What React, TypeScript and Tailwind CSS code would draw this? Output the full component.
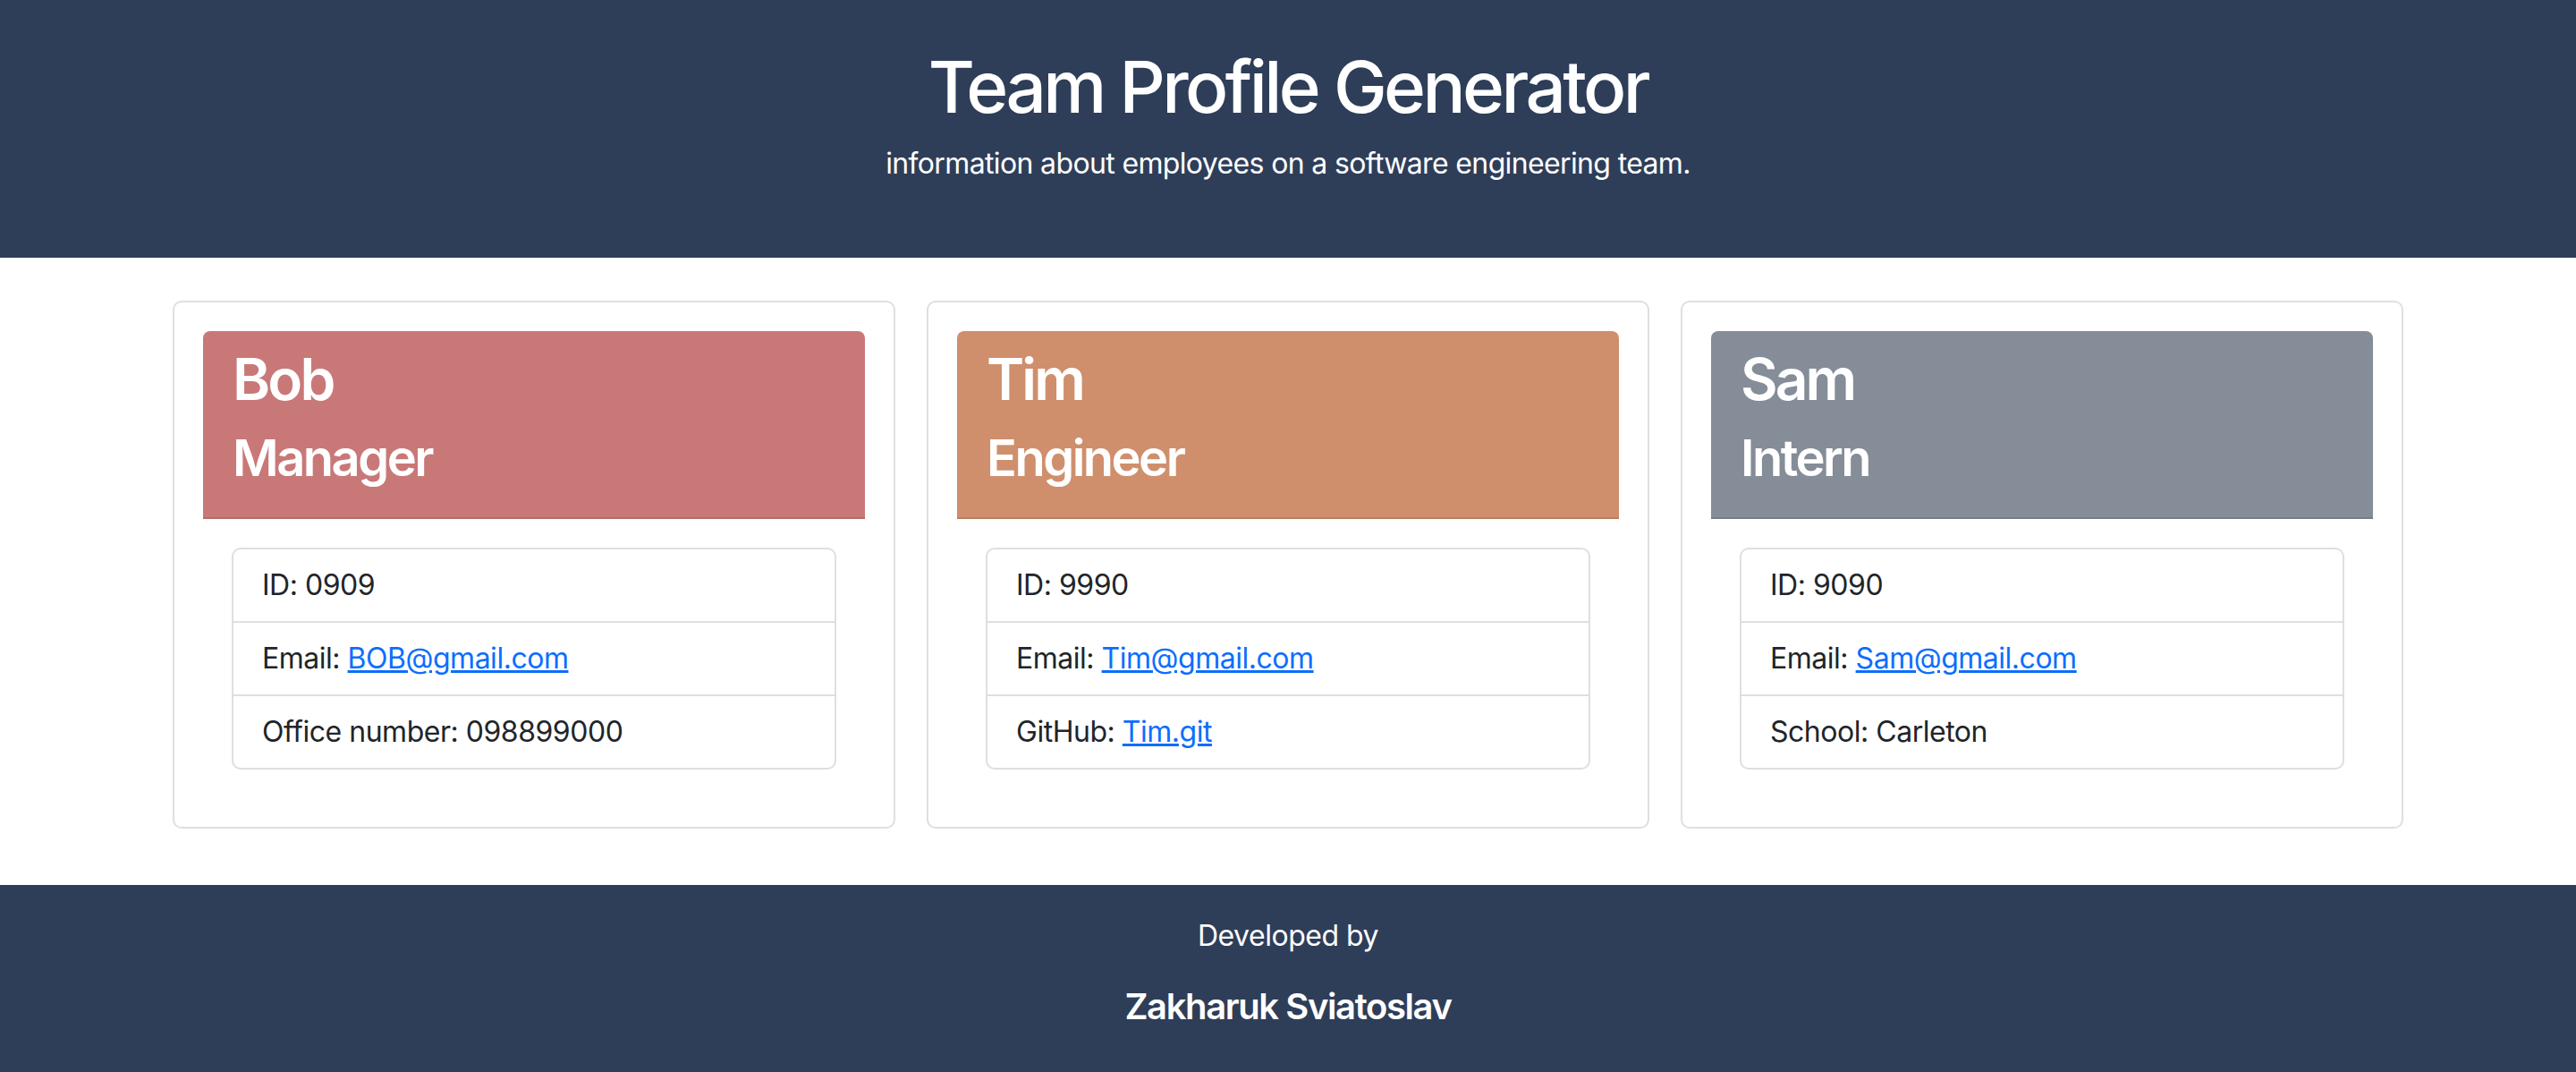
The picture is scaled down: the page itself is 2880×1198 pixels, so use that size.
const TEAM = [
  {
    name: "Bob",
    role: "Manager",
    color: "bg-[#c97878]",
    id: "0909",
    email: "BOB@gmail.com",
    extraLabel: "Office number",
    extra: "098899000",
    extraLink: false,
  },
  {
    name: "Tim",
    role: "Engineer",
    color: "bg-[#cf8f6c]",
    id: "9990",
    email: "Tim@gmail.com",
    extraLabel: "GitHub",
    extra: "Tim.git",
    extraLink: true,
  },
  {
    name: "Sam",
    role: "Intern",
    color: "bg-[#848d98]",
    id: "9090",
    email: "Sam@gmail.com",
    extraLabel: "School",
    extra: "Carleton",
    extraLink: false,
  },
];

type Member = (typeof TEAM)[number];

function Card({ m }: { m: Member }) {
  return (
    <div className="rounded-[10px] border-2 border-[#dfdfdf] bg-white p-8">
      <div className={`${m.color} rounded-t-[8px] border-b-2 border-black/10 px-[33px] py-4 text-white`}>
        <h2 className="mb-4 text-[64px] font-semibold leading-[76.8px] tracking-[-0.045em]">{m.name}</h2>
        <h3 className="mb-4 text-[56px] font-semibold leading-[67.2px] tracking-[-0.045em]">{m.role}</h3>
      </div>
      <div className="px-8 pt-8 pb-8">
        <ul className="rounded-[10px] border-2 border-[#dfdfdf] text-[32px] leading-[48px] tracking-[-0.015em] text-[#212529]">
          <li className="px-8 py-4">ID: {m.id}</li>
          <li className="border-t-2 border-[#dfdfdf] px-8 py-4">
            Email:{" "}
            <a href={`mailto:${m.email}`} className="text-[#0d6efd] underline">
              {m.email}
            </a>
          </li>
          <li className="border-t-2 border-[#dfdfdf] px-8 py-4">
            {m.extraLabel}:{" "}
            {m.extraLink ? (
              <a href="#" className="text-[#0d6efd] underline">
                {m.extra}
              </a>
            ) : (
              m.extra
            )}
          </li>
        </ul>
      </div>
    </div>
  );
}

export default function App() {
  return (
    <div className="min-h-[1198px] bg-white font-['Inter','Liberation_Sans',sans-serif]">
      <header className="flex h-[288px] flex-col items-center bg-[#2e3e59] pt-[49px] text-white">
        <h1 className="mb-[14px] text-[80px] font-medium leading-[96px] tracking-[-0.045em]">
          Team Profile Generator
        </h1>
        <p className="text-[32px] leading-[48px] tracking-[-0.02em]">
          information about employees on a software engineering team.
        </p>
      </header>

      <main className="pt-12 pb-[63px]">
        <div className="mx-auto grid w-[2494px] grid-cols-3 gap-[35px]">
          {TEAM.map((m) => (
            <Card key={m.name} m={m} />
          ))}
        </div>
      </main>

      <footer className="flex h-[210px] flex-col items-center bg-[#2e3e59] pt-[33px] text-white">
        <p className="mb-[31px] text-[32px] leading-[48px] tracking-[-0.015em]">Developed by</p>
        <h5 className="text-[40px] font-semibold leading-[48px] tracking-[-0.035em]">Zakharuk Sviatoslav</h5>
      </footer>
    </div>
  );
}
